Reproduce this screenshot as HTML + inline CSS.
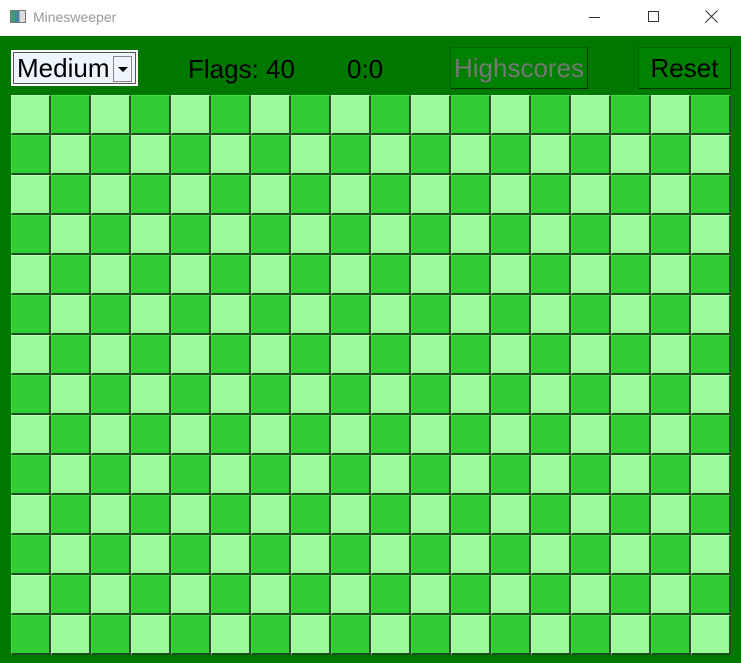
<!DOCTYPE html>
<html><head><style>
*{margin:0;padding:0;box-sizing:border-box}
body{width:741px;height:663px;background:#007800;font-family:"Liberation Sans",sans-serif;position:relative;overflow:hidden}
#title{position:absolute;left:0;top:0;width:741px;height:36px;background:#fff;color:#999;font-size:14px}
#title .t{position:absolute;left:33px;top:9px}
#title .ic{position:absolute;left:10px;top:10px;width:16px;height:13px;border:1px solid #777;background:linear-gradient(90deg,#3a6 0,#57a 60%,#ddd 60%)}
.min{position:absolute;left:589px;top:17px;width:11px;height:1px;background:#333}
.max{position:absolute;left:648px;top:11px;width:11px;height:11px;border:1px solid #333}
.x{position:absolute;left:705px;top:10px;width:13px;height:13px}
.x:before,.x:after{content:"";position:absolute;left:6px;top:-2px;width:1px;height:17px;background:#333;transform:rotate(45deg)}
.x:after{transform:rotate(-45deg)}
.combo{position:absolute;left:11px;top:50px;width:127px;height:36px;background:#eef5ff;border:2px solid #fff;outline:1px solid #555;outline-offset:-3px;font-size:26px;color:#000;padding-left:4px;line-height:32px}
.combo .dd{position:absolute;right:4px;top:4px;width:19px;height:26px;border:1px solid #888;background:#eef5ff}
.combo .dd:after{content:"";position:absolute;left:4px;top:10px;border-left:5px solid transparent;border-right:5px solid transparent;border-top:5px solid #000}
.lbl{position:absolute;top:54px;font-size:26px;color:#000}
.btn{position:absolute;top:47px;height:42px;background:#008000;border:1px solid #006400;border-right-color:#003000;border-bottom-color:#003000;font-size:26px;text-align:center;line-height:40px}
#grid{position:absolute;left:11px;top:95px;display:grid;grid-template-columns:repeat(18,40px);grid-auto-rows:40px}
.c{border-right:2px solid #2a4a2a;border-bottom:2px solid #1c4a1c;border-top:1px solid #b8ffb8;border-left:1px solid #b8ffb8}
.l{background:#98fb98}.d{background:#32cd32;border-top-color:#40dd40;border-left-color:#40dd40}
</style></head><body>
<div id="title"><div class="ic"></div><span class="t">Minesweeper</span>
<div class="min"></div><div class="max"></div><div class="x"></div></div>
<div class="combo">Medium<div class="dd"></div></div>
<div class="lbl" style="left:188px">Flags: 40</div>
<div class="lbl" style="left:347px">0:0</div>
<div class="btn" style="left:450px;width:138px;color:#777">Highscores</div>
<div class="btn" style="left:638px;width:93px;color:#000">Reset</div>
<div id="grid">
<script>
for(let r=0;r<14;r++)for(let c=0;c<18;c++)document.write('<div class="c '+((r+c)%2?'d':'l')+'"></div>');
</script>
</div>
</body></html>
